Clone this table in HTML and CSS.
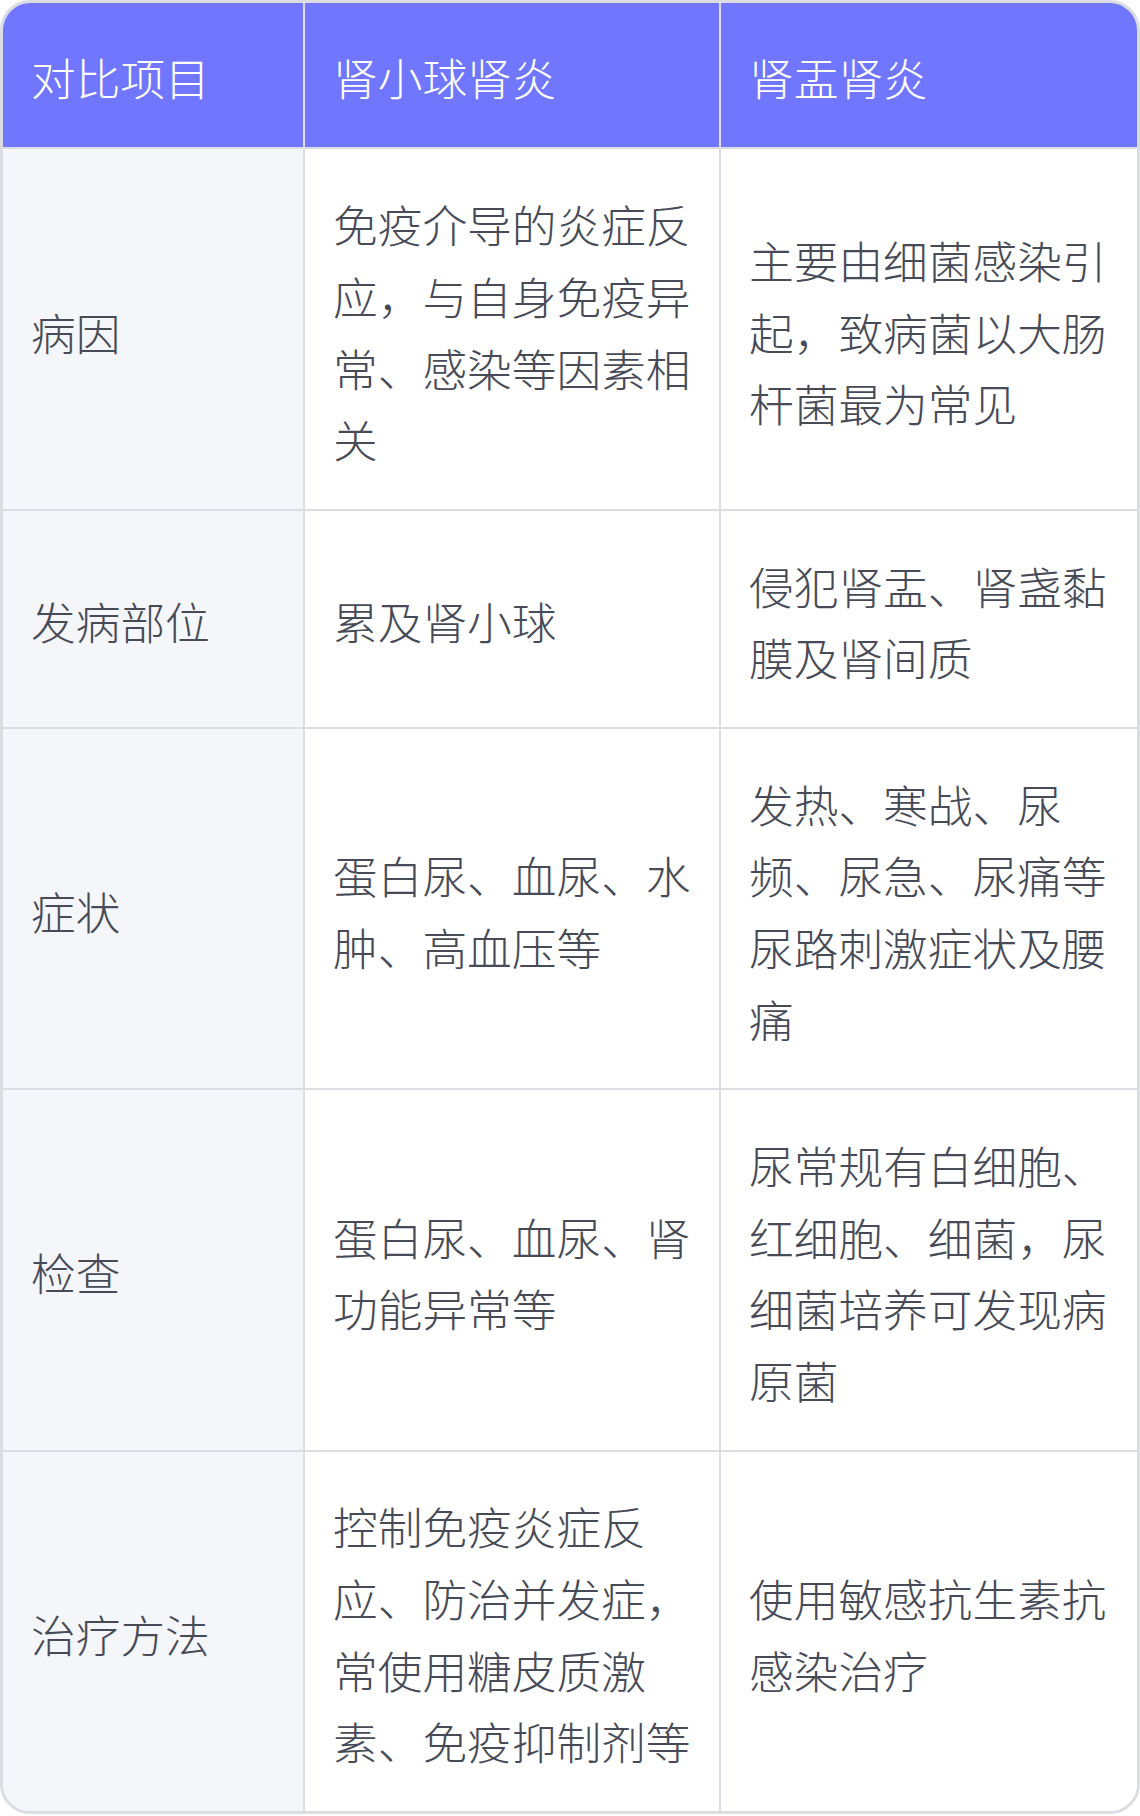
FILE: index.html
```html
<!DOCTYPE html>
<html lang="zh-CN">
<head>
<meta charset="utf-8">
<title>肾小球肾炎与肾盂肾炎对比</title>
<link rel="stylesheet" href="styles.css">
</head>
<body>
<div class="wrap">
<table class="cmp">
  <colgroup>
    <col class="c1"><col class="c2"><col class="c3">
  </colgroup>
  <thead>
    <tr><th>对比项目</th><th>肾小球肾炎</th><th>肾盂肾炎</th></tr>
  </thead>
  <tbody>
    <tr><td>病因</td><td>免疫介导的炎症反应，与自身免疫异常、感染等因素相关</td><td>主要由细菌感染引起，致病菌以大肠杆菌最为常见</td></tr>
    <tr><td>发病部位</td><td>累及肾小球</td><td>侵犯肾盂、肾盏黏膜及肾间质</td></tr>
    <tr><td>症状</td><td>蛋白尿、血尿、水肿、高血压等</td><td>发热、寒战、尿频、尿急、尿痛等尿路刺激症状及腰痛</td></tr>
    <tr><td>检查</td><td>蛋白尿、血尿、肾功能异常等</td><td>尿常规有白细胞、红细胞、细菌，尿细菌培养可发现病原菌</td></tr>
    <tr><td>治疗方法</td><td>控制免疫炎症反应、防治并发症，常使用糖皮质激素、免疫抑制剂等</td><td>使用敏感抗生素抗感染治疗</td></tr>
  </tbody>
</table>
</div>
</body>
</html>
```
FILE: styles.css
```css
html, body {
  margin: 0;
  padding: 0;
  background: #ffffff;
}
.wrap {
  width: 1140px;
}
.cmp {
  width: 1140px;
  table-layout: fixed;
  border-collapse: separate;
  border-spacing: 0;
  border: 3px solid #dcdde3;
  border-radius: 30px;
  overflow: hidden;
  font-family: "Noto Sans CJK JP", "Noto Sans CJK SC", sans-serif;
  font-size: 44.7px;
  line-height: 71.7px;
  font-weight: 300;
  color: #474a57;
}
.c1 { width: 302px; }
.c2 { width: 416px; }
.c3 { width: 416px; }
.cmp th, .cmp td {
  text-align: left;
  vertical-align: middle;
  border-right: 2px solid #dcdde3;
  border-bottom: 2px solid #dcdde3;
  font-weight: 300;
}
.cmp th {
  padding: 37.6px 28px 35px;
  background: #7176fe;
  color: #ffffff;
}
.cmp td {
  padding: 38.8px 28px 33.8px;
  background: #ffffff;
}
.cmp th:last-child, .cmp td:last-child {
  border-right: none;
}
.cmp tbody tr:last-child td {
  border-bottom: none;
}
.cmp td:first-child {
  background: #f5f6fa;
}
```
